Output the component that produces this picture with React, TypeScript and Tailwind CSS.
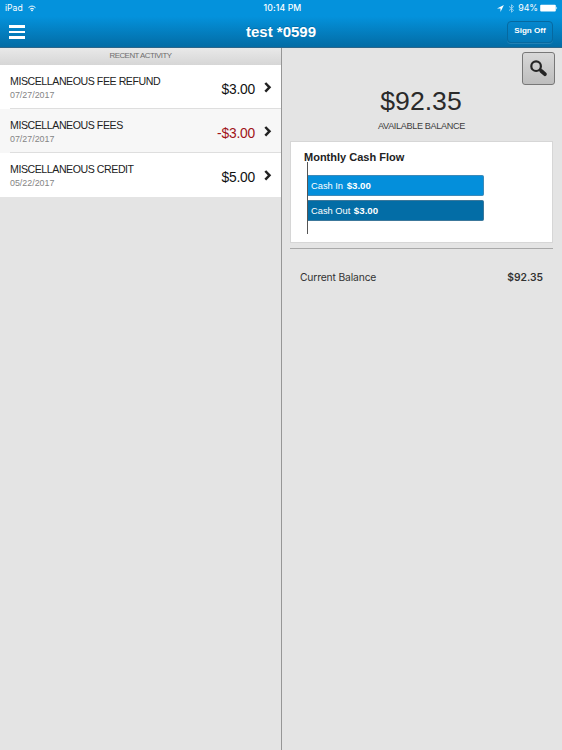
import React from 'react';

interface Activity {
  id: number;
  title: string;
  date: string;
  amount: string;
  negative?: boolean;
}

const activities: Activity[] = [
  { id: 1, title: 'MISCELLANEOUS FEE REFUND', date: '07/27/2017', amount: '$3.00' },
  { id: 2, title: 'MISCELLANEOUS FEES', date: '07/27/2017', amount: '-$3.00', negative: true },
  { id: 3, title: 'MISCELLANEOUS CREDIT', date: '05/22/2017', amount: '$5.00' },
];

function StatusBar() {
  return (
    <div className="grid grid-cols-3 h-4 items-center pl-[5px] pr-[4px] text-[8.6px] leading-4 font-['Inter',sans-serif]">
      <div className="flex items-center gap-[5px]">
        <span>iPad</span>
        <svg width="8" height="7" viewBox="0 0 9 7" fill="none" stroke="white" strokeWidth="1.1">
          <path d="M0.6 2.5Q4.5 -1 8.4 2.5" />
          <path d="M2.2 4.2Q4.5 2.2 6.8 4.2" />
          <path d="M3.1 5.3Q4.5 4.1 5.9 5.3L4.5 6.8Z" fill="white" stroke="none" />
        </svg>
      </div>
      <div className="text-center font-medium text-[8.7px] tracking-[0.1px] pl-[2px]">10:14 PM</div>
      <div className="flex items-center justify-end">
        <svg width="7" height="7" viewBox="0 0 7 7" fill="white">
          <path d="M6.9 0L0 3.4H3.5V7Z" />
        </svg>
        <svg className="ml-[4px] opacity-60" width="7" height="9" viewBox="0 0 7 9" fill="none" stroke="white" strokeWidth="0.9">
          <path d="M1 2.4L5.6 6.3L3.5 8.2V0.8L5.6 2.7L1 6.6" />
        </svg>
        <span className="ml-[3px] text-[8.9px] -tracking-[0.1px]">94%</span>
        <svg className="ml-[2px]" width="18" height="8" viewBox="0 0 18 8">
          <rect x="0.2" y="0.7" width="15.6" height="6.8" rx="1" fill="white" />
          <path d="M16.4 2.6Q18 4.1 16.4 5.6Z" fill="white" />
        </svg>
      </div>
    </div>
  );
}

function Header() {
  return (
    <header className="h-12 shrink-0 text-white bg-linear-to-b from-[#0492dc] from-35% to-[#036ca5] border-b border-[#2c668a]">
      <StatusBar />
      <div className="grid grid-cols-[1fr_auto_1fr] items-center h-[30px] pl-[9px] pr-[9px]">
        <button className="flex flex-col gap-[2.7px] w-4 mt-px" aria-label="Menu">
          <span className="block h-[2.6px] w-4 bg-white" />
          <span className="block h-[2.6px] w-4 bg-white" />
          <span className="block h-[2.6px] w-4 bg-white" />
        </button>
        <h1 className="pt-px text-[15px] leading-[30px] font-bold [text-shadow:0_-1px_0_rgba(0,60,100,0.3)]">test *0599</h1>
        <button className="justify-self-end h-[22px] w-[46px] rounded-[4px] border border-[#0669a0] bg-linear-to-b from-[#0587ce] to-[#0479b8] text-[8.1px] font-bold shadow-[0_1px_0_rgba(255,255,255,0.12)]">
          Sign Off
        </button>
      </div>
    </header>
  );
}

function ActivityRow({ item, last }: { item: Activity; last: boolean }) {
  return (
    <li className={`flex h-11 pl-[10px] ${item.negative ? 'bg-[#f7f7f7]' : 'bg-white'}`}>
      <div className={`flex flex-1 pr-[9px] ${last ? '' : 'border-b border-[#dedede]'}`}>
        <div className="flex-1 pt-[9px]">
          <div className="text-[10.6px] leading-[14px] tracking-[-0.44px] text-[#222] whitespace-nowrap">{item.title}</div>
          <div className="text-[8.9px] leading-[15px] text-[#858585]">{item.date}</div>
        </div>
        <div className={`pt-[16px] text-[13.8px] leading-[17px] tracking-[-0.2px] ${item.negative ? 'text-[#a01318]' : 'text-[#111]'}`}>
          {item.amount}
        </div>
        <svg className="mt-[17px] ml-[9px]" width="8" height="11" viewBox="0 0 8 11" fill="none" stroke="#222" strokeWidth="2.5">
          <path d="M1.3 1L5.5 5.3L1.3 9.6" />
        </svg>
      </div>
    </li>
  );
}

function CashFlow() {
  return (
    <div className="mt-[9px] ml-[8px] mr-[9px] h-[102px] bg-white border border-[#d6d6d6] pl-[13px] pt-[7px]">
      <h2 className="text-[11px] leading-[16px] font-bold text-[#222]">Monthly Cash Flow</h2>
      <div className="ml-[3px] -mt-[3px] h-[72px] border-l border-[#555] pt-[13px] text-[9.3px] leading-[20px] text-white">
        <div className="h-[21px] w-[176px] rounded-r-[2px] border border-l-0 border-[#3d8ab9] bg-[#048fdb] pl-[3px]">
          Cash In <b className="ml-[1px] text-[9.7px]">$3.00</b>
        </div>
        <div className="mt-[4px] h-[21px] w-[176px] rounded-r-[2px] border border-l-0 border-[#3c789b] bg-[#036da6] pl-[3px]">
          Cash Out <b className="ml-[1px] text-[9.7px]">$3.00</b>
        </div>
      </div>
    </div>
  );
}

export default function App() {
  return (
    <div className="flex flex-col w-[562px] h-[750px] overflow-hidden bg-[#e4e4e4] font-['Liberation_Sans',Arial,sans-serif]">
      <Header />
      <div className="flex flex-1">
        {/* Recent activity list */}
        <section className="w-[282px] border-r border-[#969696]">
          <div className="h-[17px] bg-linear-to-b from-[#e9e9e9] to-[#d6d6d6] text-center text-[7.9px] leading-[16px] tracking-[-0.5px] text-[#6e6e6e]">
            RECENT ACTIVITY
          </div>
          <ul>
            {activities.map((item, index) => (
              <ActivityRow key={item.id} item={item} last={index === activities.length - 1} />
            ))}
          </ul>
        </section>

        {/* Balance summary */}
        <section className="relative flex-1">
          <button
            className="absolute right-[7px] top-[4px] flex h-[33px] w-[33px] items-center justify-center rounded-[3px] border border-[#777] bg-linear-to-b from-[#d8d8d8] to-[#bdbdbd]"
            aria-label="Search"
          >
            <svg width="18" height="18" viewBox="0 0 18 18" fill="none" stroke="#252525">
              <circle cx="6.1" cy="6.2" r="4.8" strokeWidth="2.2" />
              <path d="M9.6 9.6L11.6 11.2" strokeWidth="2.2" />
              <path d="M11.3 11L14.9 14.2" strokeWidth="3.8" strokeLinecap="round" />
            </svg>
          </button>
          <div className="pt-[37px] pr-[2px] text-center text-[26.6px] leading-[32px] text-[#2a2a2a]">$92.35</div>
          <div className="mt-[3px] pr-[1px] text-center text-[9.1px] leading-[12px] tracking-[-0.34px] text-[#3c3c3c]">AVAILABLE BALANCE</div>
          <CashFlow />
          <div className="mt-[5px] ml-[8px] mr-[9px] border-t border-[#a9a9a9]" />
          <div className="mt-[20px] flex justify-between pl-[18px] pr-[19px] font-['Inter',sans-serif] text-[10.3px] leading-[16px] text-[#333]">
            <span className="-tracking-[0.15px]">Current Balance</span>
            <span className="font-semibold">$92.35</span>
          </div>
        </section>
      </div>
    </div>
  );
}
